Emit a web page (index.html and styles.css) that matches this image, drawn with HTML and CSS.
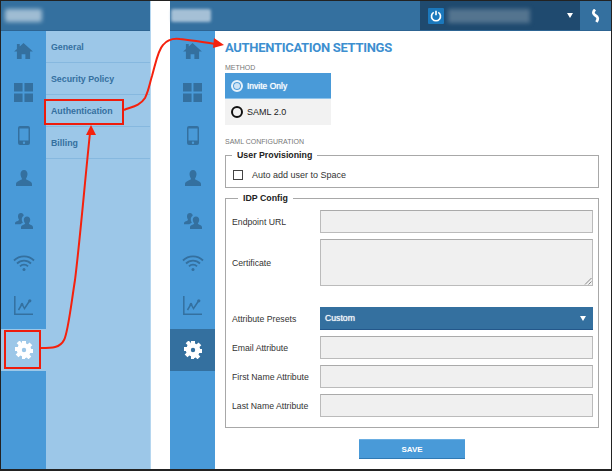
FILE: index.html
```html
<!DOCTYPE html>
<html lang="en">

<head>
    <meta charset="UTF-8">
    <meta name="viewport" content="width=device-width, initial-scale=1.0">
    <title>Authentication Settings</title>
    <link rel="stylesheet" href="styles.css">
</head>

<body>
    <svg width="0" height="0" class="defs">
        <symbol id="i-home" viewBox="0 0 20 17">
            <path d="M10 0 20 9h-3v8h-5v-5H8v5H3V9H0l3-2.700V1h3v2.800z" />
        </symbol>
        <symbol id="i-grid" viewBox="0 0 20 20">
            <path d="M0 0h9v9H0zM11 0h9v9h-9zM0 11h9v9H0zM11 11h9v9h-9z" />
        </symbol>
        <symbol id="i-phone" viewBox="0 0 12 19">
            <path fill-rule="evenodd" d="M2 0h8a2 2 0 0 1 2 2v15a2 2 0 0 1-2 2H2a2 2 0 0 1-2-2V2a2 2 0 0 1 2-2zM1.500 2.500v12h9v-12zM6 15.500a1.200 1.200 0 1 0 0 2.400 1.200 1.200 0 0 0 0-2.400z" />
        </symbol>
        <symbol id="i-user" viewBox="0 0 16 16">
            <path d="M8 0c2.200 0 3.500 1.700 3.500 4S10.300 8 10 9c0 1.200 6 2 6 5v2H0v-2c0-3 6-3.800 6-5-.3-1-1.500-2.700-1.500-5S5.800 0 8 0z" />
        </symbol>
        <symbol id="i-users" viewBox="0 0 18 16">
            <path d="M6 0c1.500 0 2.600 1 2.700 2.700C7.300 3.500 6.700 5 6.800 6.800c0 1 .5 2 1 2.700-.2.600-1.600 1.100-2.500 1.800H0V10c0-1.800 4-2 4-3.300C3.500 6 3 4.600 3 3.200 3 1.200 4.300 0 6 0z" />
            <path d="M12 3.500c2 0 3.200 1.400 3.200 3.300s-1 3-1.400 3.800c0 1 4.200 1.500 4.200 3.700V16H6v-1.700c0-2.200 4.200-2.700 4.200-3.700-.4-.8-1.400-1.900-1.400-3.800S10 3.500 12 3.500z" />
        </symbol>
        <symbol id="i-wifi" viewBox="0 0 22 16">
            <path fill="none" stroke="currentColor" stroke-width="1.800" d="M1 5.500a14 14 0 0 1 20 0M4 8.500a10 10 0 0 1 14 0M7 11.300a5.500 5.500 0 0 1 8 0" />
            <circle cx="11" cy="14.500" r="1.500" />
        </symbol>
        <symbol id="i-chart" viewBox="0 0 19 19">
            <path fill="none" stroke="currentColor" stroke-width="1.500" d="M.8 0v18.200H19M4.500 14 8 8l2.500 4.500L15.500 5" />
            <circle cx="15.800" cy="4.800" r="1.600" />
            <circle cx="8" cy="8.300" r="1.300" />
        </symbol>
        <symbol id="i-gear" viewBox="0 0 18 18">
            <path fill-rule="evenodd" d="M7 0h4v2.600l1.700.7 1.800-1.800 2.800 2.800-1.800 1.800.7 1.900H18v4h-2.800l-.7 1.700 1.800 1.800-2.800 2.800-1.800-1.800-1.700.7V18H7v-2.800l-1.700-.7-1.800 1.800-2.800-2.800 1.800-1.800-.7-1.700H0V6h2.800l.7-1.900-1.800-1.800 2.800-2.800 1.800 1.800L7 2.600zM9 6.800a2.200 2.200 0 1 0 0 4.400 2.200 2.200 0 0 0 0-4.400z" />
        </symbol>
    </svg>

    <div class="shot">
        <!-- Left panel, menu open -->
        <section class="panel panel-left">
            <header class="topbar">
                <span class="blur-logo"></span>
            </header>
            <div class="panel-body">
                <nav class="rail">
                    <a class="rail-item"><svg class="ic ic-home"><use href="#i-home" /></svg></a>
                    <a class="rail-item"><svg class="ic ic-grid"><use href="#i-grid" /></svg></a>
                    <a class="rail-item"><svg class="ic ic-phone"><use href="#i-phone" /></svg></a>
                    <a class="rail-item"><svg class="ic ic-user"><use href="#i-user" /></svg></a>
                    <a class="rail-item"><svg class="ic ic-users"><use href="#i-users" /></svg></a>
                    <a class="rail-item"><svg class="ic ic-wifi"><use href="#i-wifi" /></svg></a>
                    <a class="rail-item"><svg class="ic ic-chart"><use href="#i-chart" /></svg></a>
                    <a class="rail-item rail-item-open"><svg class="ic ic-gear"><use href="#i-gear" /></svg></a>
                </nav>
                <ul class="submenu">
                    <li>General</li>
                    <li>Security Policy</li>
                    <li>Authentication</li>
                    <li>Billing</li>
                </ul>
            </div>
        </section>

        <!-- Right panel, settings page -->
        <section class="panel panel-right">
            <header class="topbar">
                <span class="blur-logo blur-logo-wide"></span>
                <div class="account">
                    <span class="power">
                        <svg viewBox="0 0 16 16" width="12" height="12">
                            <path fill="none" stroke="#fff" stroke-width="2.200" d="M5 3.200a6 6 0 1 0 6 0M8 1v6" />
                        </svg>
                    </span>
                    <span class="blur-name"></span>
                    <span class="caret"></span>
                </div>
                <div class="logout">
                    <svg viewBox="0 0 12 15" width="11" height="14">
                        <path fill="none" stroke="#fff" stroke-width="3" d="M5.500 .5C2.500 3.500 3.500 5.500 6 7c2.500 1.500 3.500 3.500 1 7" />
                    </svg>
                </div>
            </header>
            <div class="panel-body">
                <nav class="rail">
                    <a class="rail-item"><svg class="ic ic-home"><use href="#i-home" /></svg></a>
                    <a class="rail-item"><svg class="ic ic-grid"><use href="#i-grid" /></svg></a>
                    <a class="rail-item"><svg class="ic ic-phone"><use href="#i-phone" /></svg></a>
                    <a class="rail-item"><svg class="ic ic-user"><use href="#i-user" /></svg></a>
                    <a class="rail-item"><svg class="ic ic-users"><use href="#i-users" /></svg></a>
                    <a class="rail-item"><svg class="ic ic-wifi"><use href="#i-wifi" /></svg></a>
                    <a class="rail-item"><svg class="ic ic-chart"><use href="#i-chart" /></svg></a>
                    <a class="rail-item rail-item-active"><svg class="ic ic-gear"><use href="#i-gear" /></svg></a>
                </nav>

                <main class="content">
                    <h1>AUTHENTICATION SETTINGS</h1>
                    <h2 class="section-label">METHOD</h2>
                    <div class="methods">
                        <div class="method method-on"><span class="radio radio-on"></span>Invite Only</div>
                        <div class="method"><span class="radio"></span>SAML 2.0</div>
                    </div>
                    <h2 class="section-label section-label-saml">SAML CONFIGURATION</h2>

                    <fieldset class="box box-users">
                        <legend>User Provisioning</legend>
                        <label class="check"><span class="checkbox"></span>Auto add user to Space</label>
                    </fieldset>

                    <fieldset class="box box-idp">
                        <legend>IDP Config</legend>
                        <div class="row">
                            <span class="row-label">Endpoint URL</span>
                            <span class="field"></span>
                        </div>
                        <div class="row row-cert">
                            <span class="row-label">Certificate</span>
                            <span class="field field-area">
                                <svg class="grip" viewBox="0 0 8 8" width="8" height="8">
                                    <path stroke="#888" fill="none" d="M7.500 1 1 7.500M7.500 4.500l-3 3" />
                                </svg>
                            </span>
                        </div>
                        <div class="row">
                            <span class="row-label">Attribute Presets</span>
                            <span class="select">Custom<span class="caret"></span></span>
                        </div>
                        <div class="row">
                            <span class="row-label">Email Attribute</span>
                            <span class="field"></span>
                        </div>
                        <div class="row">
                            <span class="row-label">First Name Attribute</span>
                            <span class="field"></span>
                        </div>
                        <div class="row">
                            <span class="row-label">Last Name Attribute</span>
                            <span class="field"></span>
                        </div>
                    </fieldset>

                    <div class="actions">
                        <button class="save" type="button">SAVE</button>
                    </div>
                </main>
            </div>
        </section>

        <!-- Red callouts drawn over the screenshot -->
        <div class="callout callout-auth"></div>
        <div class="callout callout-gear"></div>
        <svg class="arrows" viewBox="0 0 612 471" width="612" height="471">
            <g fill="none" stroke="#f5210d" stroke-width="2">
                <path d="M41 348C52 348 60 348 64 340 68 333 71 305 75 280 80 240 85 180 90 133" />
                <path d="M124 110C131 107 140 106 145 98 149 90 150 82 152 76 156 62 158 50 163 45 167 40 172 38 180 39 190 40 202 42 216 44" />
            </g>
            <path fill="#f5210d" d="M91 125 86 135 96 135z" />
            <path fill="#f5210d" d="M224 45 214 38 213 48z" />
        </svg>
    </div>
</body>

</html>
```

FILE: styles.css
```css
* {
    box-sizing: border-box;
}

html,
body {
    margin: 0;
    padding: 0;
}

body {
    width: 612px;
    height: 471px;
    overflow: hidden;
    font-family: "Liberation Sans", Arial, sans-serif;
    background-color: #fff;
}

.defs {
    position: absolute;
}

.shot {
    position: relative;
    display: flex;
    width: 612px;
    height: 471px;
    padding: 1px 1px 2px 1px;
    background-color: #fff;
    box-shadow: inset 1px 1px 0 #222, inset -1px -2px 0 #222;
}

.panel {
    display: flex;
    flex-direction: column;
}

.panel-left {
    width: 150px;
    margin-right: 19px;
    border-right: 1px solid #b5d6ef;
}

.panel-right {
    flex: 1;
    min-width: 0;
}

.topbar {
    display: flex;
    align-items: center;
    flex: none;
    height: 30px;
    background-color: #34709f;
    border-bottom: 1px solid #2d6492;
}

.blur-logo {
    width: 37px;
    height: 13px;
    margin-left: 4px;
    background-color: #9fbcd3;
    border-radius: 2px;
    filter: blur(2px);
}

.blur-logo-wide {
    width: 40px;
    margin-left: 1px;
    background-color: #a5c0d6;
    filter: blur(1.500px);
}

.account {
    display: flex;
    align-items: center;
    width: 160px;
    height: 29px;
    margin-left: auto;
    padding: 0 0 0 8px;
    background-color: #1f4a6f;
}

.power {
    display: flex;
    align-items: center;
    justify-content: center;
    width: 16px;
    height: 16px;
    background-color: #1b78bc;
    border-radius: 1px;
}

.blur-name {
    width: 82px;
    height: 14px;
    margin-left: 4px;
    background-color: #54748f;
    filter: blur(2px);
}

.caret {
    flex: none;
    width: 0;
    height: 0;
    border-left: 3.500px solid transparent;
    border-right: 3.500px solid transparent;
    border-top: 5px solid #fff;
}

.account .caret {
    margin-left: 37px;
}

.logout {
    display: flex;
    align-items: center;
    justify-content: center;
    width: 31px;
    height: 29px;
}

.panel-body {
    display: flex;
    flex: 1;
    min-height: 0;
}

.rail {
    display: flex;
    flex-direction: column;
    flex: none;
    width: 45px;
    background-color: #499ad8;
}

.rail-item {
    display: flex;
    align-items: center;
    justify-content: center;
    flex: none;
    height: 42.600px;
    color: #34709f;
}

.rail-item:first-child {
    height: 40.600px;
}

.rail-item-open {
    height: 42px;
    margin-top: 1.800px;
    color: #fff;
    background-color: #9cc7e8;
}

.rail-item-active {
    height: 42px;
    margin-top: 1.800px;
    color: #fff;
    background-color: #34709f;
}

.ic {
    fill: currentColor;
}

.ic-home {
    width: 19px;
    height: 16px;
}

.ic-grid {
    width: 19px;
    height: 19px;
}

.ic-phone {
    width: 12px;
    height: 19px;
}

.ic-user {
    width: 16px;
    height: 16px;
}

.ic-users {
    width: 18px;
    height: 16px;
}

.ic-wifi {
    width: 22px;
    height: 16px;
}

.ic-chart {
    width: 19px;
    height: 19px;
}

.ic-gear {
    width: 18px;
    height: 18px;
}

.submenu {
    flex: 1;
    margin: 0;
    padding: 0;
    list-style: none;
    background-color: #9cc7e8;
}

.submenu li {
    height: 32px;
    padding: 1px 0 0 5px;
    line-height: 31px;
    font-size: 8.800px;
    font-weight: bold;
    color: #34709f;
    border-bottom: 1px solid #86b8df;
}

.content {
    flex: 1;
    min-width: 0;
    padding: 0 12px 0 10px;
    background-color: #fff;
}

h1 {
    margin: 7px 0 0;
    font-size: 13px;
    line-height: 19px;
    font-weight: bold;
    color: #3d8fd0;
    font-family: Roboto, "Liberation Sans", sans-serif;
    letter-spacing: -0.300px;
}

.section-label {
    margin: 6px 0 0;
    font-size: 7px;
    line-height: 10px;
    font-weight: normal;
    color: #777;
}

.section-label-saml {
    margin-top: 12px;
}

.methods {
    width: 106px;
}

.method {
    display: flex;
    align-items: center;
    height: 26px;
    padding-left: 6px;
    font-size: 9px;
    color: #222;
    background-color: #f2f2f2;
}

.method-on {
    height: 26px;
    font-size: 8.500px;
    color: #fff;
    text-shadow: 0 0 1px #fff;
    background-color: #499ad8;
    border-bottom: 1px solid #8fc3ea;
}

.radio {
    flex: none;
    width: 12px;
    height: 12px;
    margin-right: 4px;
    border: 2px solid #111;
    border-radius: 50%;
}

.radio-on {
    background-color: #499ad8;
    border: 2px solid #e8f2fa;
    box-shadow: inset 0 0 0 1px #499ad8, inset 0 0 0 4px #cfe3f4;
}

.box {
    margin: 0;
    padding: 0;
    min-width: 0;
    border: 1px solid #a8a8a8;
}

.box legend {
    margin-left: 6px;
    padding: 0 5px;
    font-size: 8.800px;
    line-height: 10px;
    font-weight: bold;
    color: #222;
}

.box-users {
    height: 38px;
    margin-top: 3px;
    padding-top: 3px;
}

.check {
    display: flex;
    align-items: center;
    height: 24px;
    padding-left: 7px;
    font-size: 9px;
    color: #333;
}

.checkbox {
    width: 10px;
    height: 10px;
    margin-right: 9px;
    border: 1px solid #444;
    background-color: #fff;
}

.box-idp {
    height: 235px;
    margin-top: 5px;
    padding: 7px 5px 0 6px;
}

.row {
    display: flex;
    align-items: center;
    height: 23px;
    margin-bottom: 6px;
    font-size: 8.700px;
    color: #333;
}

.row-cert {
    height: 47px;
    margin-bottom: 21px;
}

.row-label {
    flex: none;
    width: 88px;
}

.field {
    position: relative;
    flex: 1;
    height: 100%;
    background-color: #f0f0f0;
    border: 1px solid #bbb;
    border-top-color: #aaa;
}

.grip {
    position: absolute;
    right: 0;
    bottom: 0;
}

.select {
    display: flex;
    align-items: center;
    justify-content: space-between;
    flex: 1;
    height: 100%;
    padding: 0 7px 0 5px;
    color: #f2f6fa;
    text-shadow: 0 0 1px #fff;
    background-color: #34709f;
    border-bottom: 1px solid #24578a;
}

.actions {
    display: flex;
    justify-content: center;
    margin-top: 11px;
}

.save {
    width: 106px;
    height: 20px;
    padding: 0;
    font-family: inherit;
    font-size: 8px;
    font-weight: bold;
    color: #fff;
    background-color: #499ad8;
    border: 0;
    border-top: 1px solid #6aaee2;
    border-bottom: 1px solid #2f79b4;
}

.callout {
    position: absolute;
    border: 2px solid #ee1c0c;
}

.callout-auth {
    left: 44px;
    top: 99px;
    width: 80px;
    height: 26px;
}

.callout-gear {
    left: 4px;
    top: 330px;
    width: 37px;
    height: 39px;
}

.arrows {
    position: absolute;
    left: 0;
    top: 0;
}
```
